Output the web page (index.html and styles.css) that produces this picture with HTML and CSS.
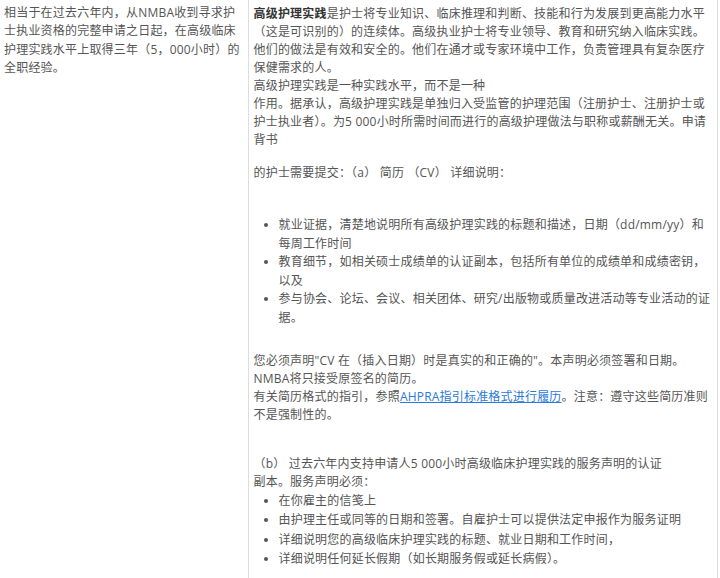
FILE: index.html
```html
<!DOCTYPE html>
<html lang="zh-CN">
<head>
    <meta charset="UTF-8">
    <meta name="viewport" content="width=device-width, initial-scale=1.0">
    <title>高级护理实践 - 申请要求</title>
    <link rel="stylesheet" href="styles.css">
</head>
<body>

<table class="req">
    <tr>
        <td class="crit">
            相当于在过去六年内，从NMBA收到寻求护<br>士执业资格的完整申请之日起，在高级临床<br>护理实践水平上取得三年（5，000小时）的<br>全职经验。
        </td>
        <td class="detail">
            <p><strong>高级护理实践</strong>是护士将专业知识、临床推理和判断、技能和行为发展到更高能力水平<br>（这是可识别的）的连续体。高级执业护士将专业领导、教育和研究纳入临床实践。<br>他们的做法是有效和安全的。他们在通才或专家环境中工作，负责管理具有复杂医疗<br>保健需求的人。<br>高级护理实践是一种实践水平，而不是一种<br>作用。据承认，高级护理实践是单独归入受监管的护理范围（注册护士、注册护士或<br>护士执业者）。为5 000小时所需时间而进行的高级护理做法与职称或薪酬无关。申请<br>背书</p>

            <p class="gap">的护士需要提交：（a） 简历 （CV） 详细说明：</p>

            <ul class="list">
                <li>就业证据，清楚地说明所有高级护理实践的标题和描述，日期（dd/mm/yy）和<br>每周工作时间</li>
                <li>教育细节，如相关硕士成绩单的认证副本，包括所有单位的成绩单和成绩密钥，<br>以及</li>
                <li>参与协会、论坛、会议、相关团体、研究/出版物或质量改进活动等专业活动的证<br>据。</li>
            </ul>

            <p class="gap-lg">您必须声明"CV 在（插入日期）时是真实的和正确的"。本声明必须签署和日期。<br>NMBA将只接受原签名的简历。<br>有关简历格式的指引，参照<a href="#">AHPRA指引标准格式进行履历</a>。注意：遵守这些简历准则<br>不是强制性的。</p>

            <p class="gap-xl">（b） 过去六年内支持申请人5 000小时高级临床护理实践的服务声明的认证<br>副本。服务声明必须：</p>

            <ul class="list list-loose">
                <li>在你雇主的信笺上</li>
                <li>由护理主任或同等的日期和签署。自雇护士可以提供法定申报作为服务证明</li>
                <li>详细说明您的高级临床护理实践的标题、就业日期和工作时间，</li>
                <li>详细说明任何延长假期（如长期服务假或延长病假）。</li>
            </ul>
        </td>
    </tr>
</table>

</body>
</html>
```

FILE: styles.css
```css
* {
    margin: 0;
    padding: 0;
    box-sizing: border-box;
}

body {
    background: #fff;
    color: #555;
    font-family: 'Open Sans', 'Noto Sans CJK SC', sans-serif;
    font-size: 12px;
    line-height: 18px;
    letter-spacing: 0.2px;
}

.req {
    width: 718px;
    border-collapse: collapse;
}

.req td {
    vertical-align: top;
    border: 1px solid #ddd;
    border-top: none;
}

.req .crit {
    width: 248px;
    padding: 4px 4px 0 4px;
    border-left: none;
    line-height: 18.4px;
}

.req .detail {
    padding: 5px 5px 20px 5px;
}

.detail strong {
    color: #333;
    font-weight: bold;
}

.detail a {
    color: #2a7ad8;
    text-decoration: underline;
}

.gap {
    margin-top: 15px;
}

.gap-lg {
    margin-top: 24px;
}

.gap-xl {
    margin-top: 31px;
}

.list {
    margin: 34px 0 0 25px;
}

.list li {
    line-height: 18.6px;
}

.list-loose {
    margin-top: 0;
}

.list-loose li {
    line-height: 19.5px;
}
```
